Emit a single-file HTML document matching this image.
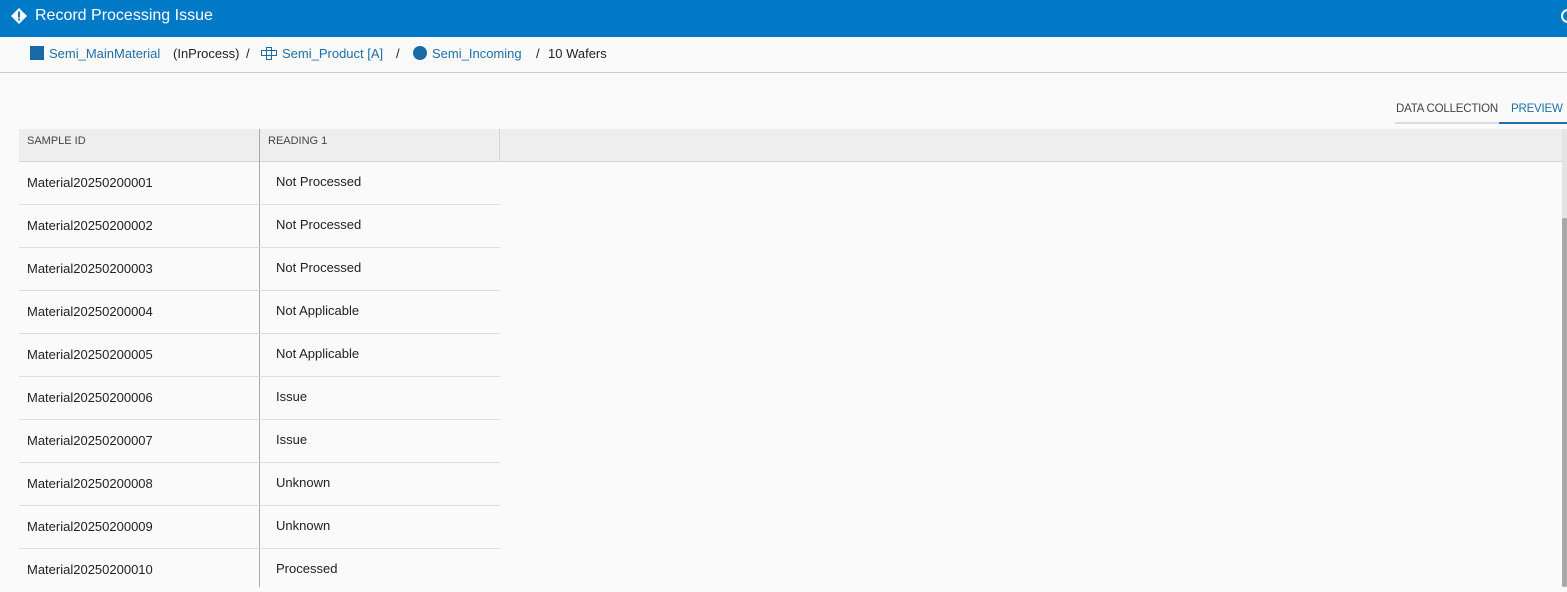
<!DOCTYPE html>
<html><head><style>
*{margin:0;padding:0;box-sizing:border-box}
body{width:1567px;height:587px;overflow:hidden;background:#fafafa;font-family:"Liberation Sans",sans-serif;color:#222;position:relative}
.top{position:absolute;left:0;top:0;width:1567px;height:37px;background:#0079c7;color:#fff;font-size:16px}
.top .t{position:absolute;left:35px;top:7px}
.bc{position:absolute;left:0;top:37px;width:1567px;height:36px;border-bottom:1px solid #ccc;font-size:13px;white-space:nowrap}
.bc span{position:absolute;top:9px}
.lnk{color:#1f6fa8}
.tabs{position:absolute;top:103px;font-size:11.5px;color:#444;letter-spacing:-0.2px}
.tabline{position:absolute;top:122px;height:2px}
.hdr{position:absolute;left:19px;top:129px;width:1543px;height:33px;background:#eeeeee;border-bottom:1px solid #d4d4d4;font-size:11px;color:#444}
.cell{position:absolute;font-size:13px}
.row{position:absolute;left:19px;width:481px;height:43px;border-bottom:1px solid #ddd}
</style></head><body>
<div class="top">
<svg style="position:absolute;left:10px;top:7px" width="18" height="18" viewBox="0 0 18 18"><path d="M9 1L17 9L9 17L1 9Z" fill="#fff"/><rect x="8" y="4.5" width="2" height="6" fill="#0079c7"/><rect x="8" y="11.5" width="2" height="2" fill="#0079c7"/></svg>
<span class="t">Record Processing Issue</span>
<div style="position:absolute;left:1561px;top:9px;width:14px;height:14px;border:2px solid #fff;border-radius:50%"></div>
</div>
<div class="bc">
<div style="position:absolute;left:30px;top:9px;width:14px;height:14px;background:#1a6aa5"></div>
<span class="lnk" style="left:49px">Semi_MainMaterial</span>
<span style="left:173px">(InProcess)</span>
<span style="left:246px">/</span>
<svg style="position:absolute;left:261px;top:10px" width="16" height="13" viewBox="0 0 16 13" fill="none" stroke="#1a6aa5" stroke-width="1"><rect x="5.5" y="0.5" width="5" height="12"/><rect x="0.5" y="3.5" width="15" height="5"/></svg>
<span class="lnk" style="left:282px">Semi_Product [A]</span>
<span style="left:396px">/</span>
<div style="position:absolute;left:413px;top:9px;width:14px;height:14px;border-radius:50%;background:#1a6aa5"></div>
<span class="lnk" style="left:432px">Semi_Incoming</span>
<span style="left:536px">/</span>
<span style="left:548px">10 Wafers</span>
</div>
<span class="tabs" style="left:1396px">DATA COLLECTION</span>
<span class="tabs" style="left:1511px;color:#1f6fa8">PREVIEW</span>
<div class="tabline" style="left:1395px;width:104px;background:#ddd"></div>
<div class="tabline" style="left:1499px;width:68px;background:#1f6fa8"></div>
<div class="hdr">
<span style="position:absolute;left:8px;top:6px">SAMPLE ID</span>
<div style="position:absolute;left:240px;top:0;width:1px;height:33px;background:#aaa"></div>
<span style="position:absolute;left:249px;top:6px">READING 1</span>
<div style="position:absolute;left:480px;top:0;width:1px;height:33px;background:#d4d4d4"></div>
</div>
<div style="position:absolute;left:1562px;top:129px;width:5px;height:458px;background:#e4e4e4"></div>
<div style="position:absolute;left:1562px;top:218px;width:5px;height:369px;background:#a8a8a8;border-radius:2px"></div>
<div style="position:absolute;left:259px;top:162px;width:1px;height:425px;background:#aaa"></div>
<div class="row" style="top:162px"><span class="cell" style="left:8px;top:13px">Material20250200001</span><span class="cell" style="left:257px;top:12px">Not Processed</span></div>
<div class="row" style="top:205px"><span class="cell" style="left:8px;top:13px">Material20250200002</span><span class="cell" style="left:257px;top:12px">Not Processed</span></div>
<div class="row" style="top:248px"><span class="cell" style="left:8px;top:13px">Material20250200003</span><span class="cell" style="left:257px;top:12px">Not Processed</span></div>
<div class="row" style="top:291px"><span class="cell" style="left:8px;top:13px">Material20250200004</span><span class="cell" style="left:257px;top:12px">Not Applicable</span></div>
<div class="row" style="top:334px"><span class="cell" style="left:8px;top:13px">Material20250200005</span><span class="cell" style="left:257px;top:12px">Not Applicable</span></div>
<div class="row" style="top:377px"><span class="cell" style="left:8px;top:13px">Material20250200006</span><span class="cell" style="left:257px;top:12px">Issue</span></div>
<div class="row" style="top:420px"><span class="cell" style="left:8px;top:13px">Material20250200007</span><span class="cell" style="left:257px;top:12px">Issue</span></div>
<div class="row" style="top:463px"><span class="cell" style="left:8px;top:13px">Material20250200008</span><span class="cell" style="left:257px;top:12px">Unknown</span></div>
<div class="row" style="top:506px"><span class="cell" style="left:8px;top:13px">Material20250200009</span><span class="cell" style="left:257px;top:12px">Unknown</span></div>
<div class="row" style="top:549px;border-bottom:none"><span class="cell" style="left:8px;top:13px">Material20250200010</span><span class="cell" style="left:257px;top:12px">Processed</span></div>
</body></html>
